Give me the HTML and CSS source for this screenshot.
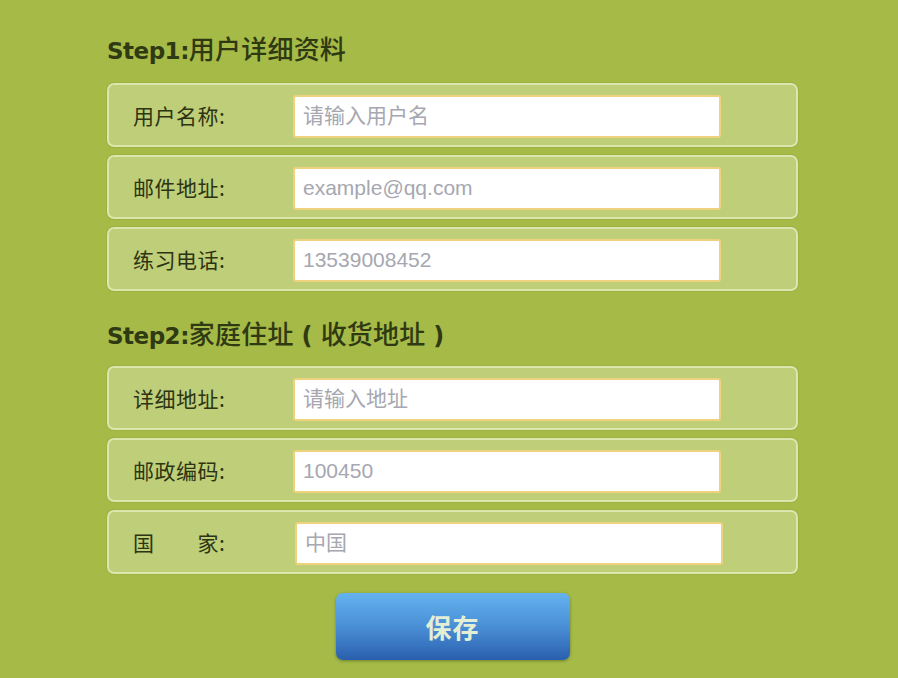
FILE: index.html
```html
<!DOCTYPE html>
<html lang="zh-CN">
<head>
<meta charset="utf-8">
<title>用户详细资料</title>
<link rel="stylesheet" href="styles.css">
</head>
<body>
<form class="form">
  <h2 class="step-title"><span class="step-no">Step1:</span>用户详细资料</h2>
  <div class="rows">
    <div class="row"><label class="label">用户名称:</label><input class="field" type="text" placeholder="请输入用户名"></div>
    <div class="row"><label class="label">邮件地址:</label><input class="field" type="text" placeholder="example@qq.com"></div>
    <div class="row"><label class="label">练习电话:</label><input class="field" type="text" placeholder="13539008452"></div>
  </div>
  <h2 class="step-title step-title-2"><span class="step-no">Step2:</span>家庭住址<span class="paren">(</span>收货地址<span class="paren">)</span></h2>
  <div class="rows">
    <div class="row"><label class="label">详细地址:</label><input class="field" type="text" placeholder="请输入地址"></div>
    <div class="row"><label class="label">邮政编码:</label><input class="field" type="text" placeholder="100450"></div>
    <div class="row"><label class="label label-country">国　　家:</label><input class="field" type="text" placeholder="中国"></div>
  </div>
  <div class="actions">
    <button class="save" type="button">保存</button>
  </div>
</form>
</body>
</html>
```

FILE: styles.css
```css
* { box-sizing: border-box; }

html, body {
  margin: 0;
  padding: 0;
  background: #a5ba47;
  height: 100%;
}

body {
  font-family: "Liberation Sans", "Noto Sans CJK SC", sans-serif;
}

.form {
  width: 691px;
  margin-left: 107px;
  padding-top: 31px;
}

.step-title {
  margin: 0 0 18px 0;
  height: 34px;
  line-height: 34px;
  font-size: 26px;
  font-weight: 500;
  color: #2f3912;
  font-family: "Noto Sans CJK SC", sans-serif;
  white-space: nowrap;
  letter-spacing: 0.2px;
}

.step-no {
  font-family: "DejaVu Sans", sans-serif;
  font-weight: bold;
  font-size: 23px;
  letter-spacing: -0.5px;
}

.paren {
  display: inline-block;
  width: 27px;
  text-align: center;
  font-family: "DejaVu Sans", sans-serif;
  font-size: 24px;
  font-weight: bold;
}

.step-title-2 {
  margin-top: 25px;
  margin-bottom: 16px;
}

.rows {
  display: flex;
  flex-direction: column;
  gap: 8px;
}

.row {
  height: 64px;
  display: flex;
  align-items: center;
  padding-left: 24px;
  background: #bfce79;
  border: 2px solid #dbe5ad;
  border-radius: 7px;
  box-shadow: 0 0 0 1px rgba(150, 170, 60, 0.5);
}

.label {
  width: 160px;
  flex: none;
  font-family: "Noto Sans CJK SC", sans-serif;
  font-size: 21px;
  font-weight: normal;
  color: #2c3412;
  letter-spacing: 0.5px;
}

.field {
  width: 428px;
  height: 43px;
  margin: 2px 0 0 0;
  padding: 0 8px;
  border: 2px solid #efd27d;
  border-radius: 3px;
  background: #fff;
  font-family: "Liberation Sans", "Noto Sans CJK SC", sans-serif;
  font-size: 21px;
  color: #555;
  outline: none;
}

.label-country + .field {
  margin-left: 2px;
}

.field::placeholder {
  color: #a6a7b0;
  opacity: 1;
}

.actions {
  display: flex;
  justify-content: center;
  margin-top: 19px;
}

.save {
  width: 234px;
  height: 67px;
  border: none;
  border-radius: 7px;
  background: linear-gradient(#64b3f0, #4a8fd6 50%, #2a5fae);
  box-shadow: 0 1px 3px rgba(40, 60, 20, 0.45);
  color: #e3efd4;
  font-family: "Noto Sans CJK SC", sans-serif;
  font-weight: bold;
  font-size: 26px;
  letter-spacing: 1px;
  cursor: pointer;
}
```
